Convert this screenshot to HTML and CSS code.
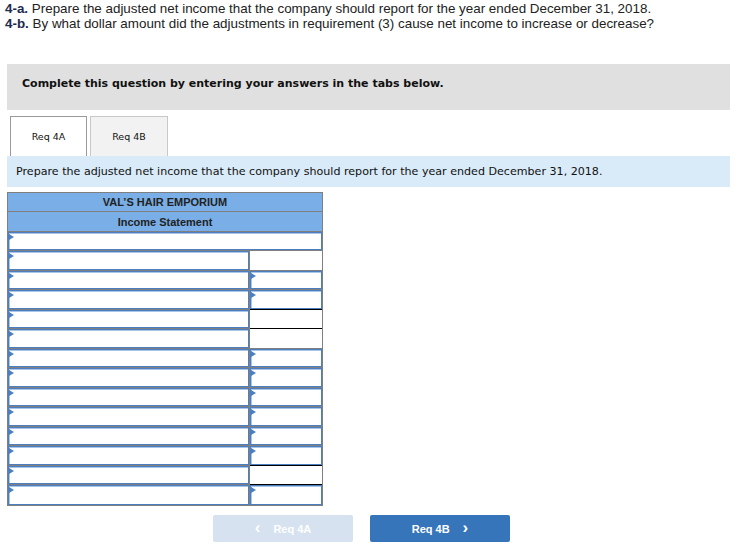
FILE: index.html
```html
<!DOCTYPE html>
<html>
<head>
<meta charset="utf-8">
<link rel="stylesheet" href="styles.css">
</head>
<body>
<div class="page">
  <div class="question">
    <p><b class="lbl">4-a.</b> Prepare the adjusted net income that the company should report for the year ended December 31, 2018.</p>
    <p><b class="lbl">4-b.</b> By what dollar amount did the adjustments in requirement (3) cause net income to increase or decrease?</p>
  </div>

  <div class="instr">Complete this question by entering your answers in the tabs below.</div>

  <div class="tabs">
    <div class="tab active">Req 4A</div>
    <div class="tab">Req 4B</div>
  </div>

  <div class="info">Prepare the adjusted net income that the company should report for the year ended December 31, 2018.</div>

  <div class="sheet">
    <div class="hd h1">VAL’S HAIR EMPORIUM</div>
    <div class="hd h2">Income Statement</div>

    <div class="row r19"><div class="cell full"><div class="inp"></div></div></div>
    <div class="row r20"><div class="cell l"><div class="inp"></div></div><div class="cell r"></div></div>
    <div class="row r19"><div class="cell l"><div class="inp"></div></div><div class="cell r"><div class="inp"></div></div></div>
    <div class="row r20"><div class="cell l"><div class="inp"></div></div><div class="cell r"><div class="inp"></div></div></div>
    <div class="row r19"><div class="cell l"><div class="inp"></div></div><div class="cell r sum"></div></div>
    <div class="row r20"><div class="cell l"><div class="inp"></div></div><div class="cell r"></div></div>
    <div class="row r19"><div class="cell l"><div class="inp"></div></div><div class="cell r"><div class="inp"></div></div></div>
    <div class="row r20"><div class="cell l"><div class="inp"></div></div><div class="cell r"><div class="inp"></div></div></div>
    <div class="row r19"><div class="cell l"><div class="inp"></div></div><div class="cell r"><div class="inp"></div></div></div>
    <div class="row r20"><div class="cell l"><div class="inp"></div></div><div class="cell r"><div class="inp"></div></div></div>
    <div class="row r19"><div class="cell l"><div class="inp"></div></div><div class="cell r"><div class="inp"></div></div></div>
    <div class="row r20"><div class="cell l"><div class="inp"></div></div><div class="cell r"><div class="inp"></div></div></div>
    <div class="row r19"><div class="cell l"><div class="inp"></div></div><div class="cell r sum"></div></div>
    <div class="row r20 last"><div class="cell l"><div class="inp"></div></div><div class="cell r total"><div class="inp"></div></div></div>
  </div>

  <div class="nav">
    <div class="btn disabled"><span class="chev">&lsaquo;</span>Req 4A</div>
    <div class="btn primary">Req 4B<span class="chev">&rsaquo;</span></div>
  </div>
</div>
</body>
</html>
```

FILE: styles.css
```css
* { box-sizing: border-box; }
html, body { margin: 0; padding: 0; background: #fff; }
body { font-family: "Liberation Sans", Arial, sans-serif; color: #1a1a1a; }

.page { width: 742px; padding: 0 12px 0 7px; }

.question { margin-left: -2px; font-size: 13.4px; line-height: 15px; padding-top: 1px; color: #222; }
.question p { margin: 0; }
.question .lbl { font-weight: bold; color: #1d2b50; }

.instr {
  margin-top: 33px;
  height: 46px;
  background: #e0e0e0;
  font-family: "DejaVu Sans", Verdana, sans-serif;
  font-weight: bold;
  font-size: 11px;
  color: #111;
  display: flex;
  align-items: center;
  padding-left: 15px;
  padding-bottom: 8px;
}

.tabs { display: flex; gap: 3px; margin-top: 6px; padding-left: 3px; height: 40px; }
.tab {
  width: 78px;
  height: 40px;
  border: 1px solid #c8c8c8;
  border-bottom: none;
  background: #f2f2f2;
  font-family: "DejaVu Sans", Verdana, sans-serif;
  font-size: 9.5px;
  color: #111;
  display: flex;
  align-items: center;
  justify-content: center;
  padding-bottom: 1px;
}
.tab.active { width: 77px; background: #fff; border-color: #9a9a9a; }

.info {
  height: 31px;
  background: #d9ebf8;
  font-family: "DejaVu Sans", Verdana, sans-serif;
  font-size: 11.1px;
  color: #111;
  display: flex;
  align-items: center;
  padding-left: 9px;
  padding-bottom: 0;
}

.sheet {
  margin-top: 5px;
  width: 316px;
  border: 1px solid #7f7f7f;
  display: flex;
  flex-direction: column;
}
.hd {
  background: #79aee6;
  font-family: "Liberation Sans", Arial, sans-serif;
  font-weight: bold;
  font-size: 11px;
  color: #222;
  display: flex;
  align-items: center;
  justify-content: center;
  border-bottom: 1px solid #7f7f7f;
}
.h1 { height: 19px; padding-bottom: 1px; }
.h2 { height: 20px; }

.row { display: grid; grid-template-columns: 242px 72px; }
.r19 { height: 19px; }
.r20 { height: 20px; }
.cell { border-bottom: 1px solid #7f7f7f; position: relative; display: flex; }
.cell.full { grid-column: 1 / 3; }
.cell.l { border-right: 1px solid #7f7f7f; }
.row.last .cell { border-bottom: none; }
.cell.sum { border-top: 1px solid #000; border-bottom: 1px solid #000; margin-top: -1px; }
.cell.total { border-bottom: 3px double #000; }

.inp {
  flex: 1;
  position: relative;
  border: 1px solid #4d7fc0;
  box-shadow: inset 1px 1px 0 #a9c6e8;
  background: #fff;
}
.inp::before {
  content: "";
  position: absolute;
  left: 0;
  top: 1px;
  border-left: 5px solid #4a7fc4;
  border-top: 3px solid transparent;
  border-bottom: 3px solid transparent;
}

.nav { display: flex; gap: 17px; margin-top: 9px; padding-left: 206px; }
.btn {
  width: 140px;
  height: 27px;
  border-radius: 2px;
  font-family: "Liberation Sans", Arial, sans-serif;
  font-weight: bold;
  font-size: 11px;
  color: #fff;
  display: flex;
  align-items: center;
  justify-content: center;
  gap: 13px;
}
.btn .chev { font-size: 17px; line-height: 1; padding-bottom: 2px; font-weight: bold; }
.btn.disabled { background: #d6e2f0; }
.btn.primary { background: #3775bb; }
```
